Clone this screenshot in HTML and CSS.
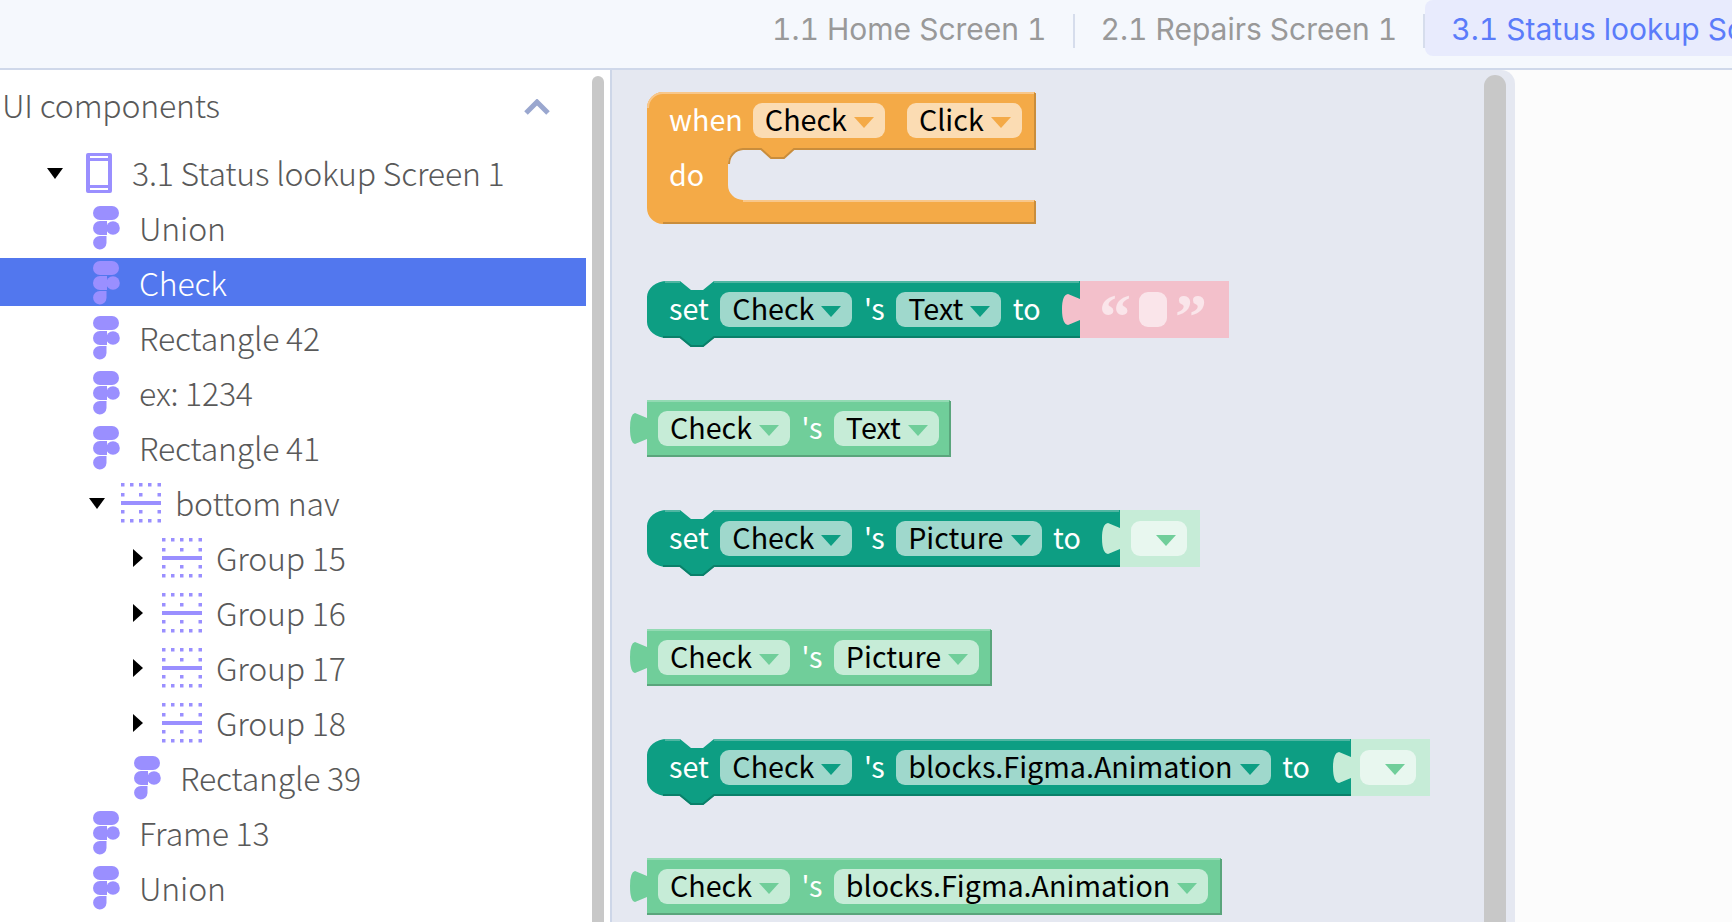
FILE: index.html
```html
<!DOCTYPE html>
<html lang="en">
    <head>
        <meta charset="UTF-8">
        <meta name="viewport" content="width=device-width, initial-scale=1.0">
        <title>Blocks editor</title>
        <link rel="stylesheet" href="styles.css">
    </head>
    <body>
        <svg class="icon-defs" width="0" height="0">
            <symbol id="icon-figma" viewBox="0 0 27 44">
                <rect x="0" y="0" width="26" height="14" rx="7"/>
                <path d="M7 15h7v14H7a7 7 0 0 1 0-14z"/>
                <circle cx="20" cy="22" r="6.8"/>
                <path d="M7 30h6.5v7a6.7 6.7 0 1 1-6.5-7z"/>
            </symbol>
            <symbol id="icon-phone" viewBox="0 0 26 40">
                <path fill-rule="evenodd" d="M2 0h22a2 2 0 0 1 2 2v36a2 2 0 0 1-2 2H2a2 2 0 0 1-2-2V2a2 2 0 0 1 2-2zM4 3v2h18V3zM4 8v24h18V8zM4 35v2h18v-2z"/>
            </symbol>
            <symbol id="icon-group" viewBox="0 0 40 40">
                <path d="M0 0h3.5v3.5H0zM9 0h3.5v3.5H9zM18 0h3.5v3.5h-3.5zM27 0h3.5v3.5h-3.5zM36.500 0h3.5v3.5h-3.5zM0 10h3.5v3.5H0zM18 10h3.5v3.5h-3.5zM36.500 10h3.5v3.500h-3.5zM0 18h40v4H0zM0 27h3.5v3.5H0zM18 27h3.5v3.5h-3.5zM36.500 27h3.5v3.5h-3.5zM0 36h3.5v3.5H0zM9 36h3.5v3.5H9zM18 36h3.5v3.5h-3.5zM27 36h3.5v3.5h-3.5zM36.500 36h3.5v3.5h-3.5z"/>
            </symbol>
        </svg>

        <header class="topbar">
            <nav class="tabs">
                <a class="tab">1.1 Home Screen 1</a>
                <span class="tab-sep"></span>
                <a class="tab">2.1 Repairs Screen 1</a>
                <span class="tab-sep"></span>
                <a class="tab tab-active">3.1 Status lookup Screen 1</a>
            </nav>
        </header>

        <main class="main">
            <aside class="sidebar">
                <div class="sidebar-inner">
                    <div class="sidebar-head">
                        <span>UI components</span>
                        <svg class="chevron" width="26" height="16" viewBox="0 0 26 16"><path d="M2 14 13 3l11 11"/></svg>
                    </div>
                    <ul class="tree">
                        <li class="row row-screen"><span class="caret caret-down"></span><svg class="icon icon-phone"><use href="#icon-phone"/></svg>3.1 Status lookup Screen 1</li>
                        <li class="row row-leaf"><svg class="icon icon-figma"><use href="#icon-figma"/></svg>Union</li>
                        <li class="row row-leaf row-selected"><svg class="icon icon-figma"><use href="#icon-figma"/></svg>Check</li>
                        <li class="row row-leaf"><svg class="icon icon-figma"><use href="#icon-figma"/></svg>Rectangle 42</li>
                        <li class="row row-leaf"><svg class="icon icon-figma"><use href="#icon-figma"/></svg>ex: 1234</li>
                        <li class="row row-leaf"><svg class="icon icon-figma"><use href="#icon-figma"/></svg>Rectangle 41</li>
                        <li class="row row-nav"><span class="caret caret-down"></span><svg class="icon icon-group"><use href="#icon-group"/></svg>bottom nav</li>
                        <li class="row row-group"><span class="caret caret-right"></span><svg class="icon icon-group"><use href="#icon-group"/></svg>Group 15</li>
                        <li class="row row-group"><span class="caret caret-right"></span><svg class="icon icon-group"><use href="#icon-group"/></svg>Group 16</li>
                        <li class="row row-group"><span class="caret caret-right"></span><svg class="icon icon-group"><use href="#icon-group"/></svg>Group 17</li>
                        <li class="row row-group"><span class="caret caret-right"></span><svg class="icon icon-group"><use href="#icon-group"/></svg>Group 18</li>
                        <li class="row row-leaf row-leaf-deep"><svg class="icon icon-figma"><use href="#icon-figma"/></svg>Rectangle 39</li>
                        <li class="row row-leaf"><svg class="icon icon-figma"><use href="#icon-figma"/></svg>Frame 13</li>
                        <li class="row row-leaf"><svg class="icon icon-figma"><use href="#icon-figma"/></svg>Union</li>
                    </ul>
                </div>
                <div class="scrollbar scrollbar-side"></div>
            </aside>

            <section class="workspace">
                <div class="canvas">

                    <!-- when Check.Click -->
                    <div class="block block-event">
                        <svg class="shape" width="389" height="133">
                            <path class="fill" d="M0 16A16 16 0 0 1 16 0H388V57H147L137 66H124L114 57H96A15 15 0 0 0 81 72V93A15 15 0 0 0 96 108H388V132H16A16 16 0 0 1 0 116Z"/>
                            <path class="light" d="M1 16A15 15 0 0 1 16 1H387M96 109H387"/>
                            <path class="dark" d="M388 1V57H147L137 66H124L114 57H96A15 15 0 0 0 82 72M388 109V131H16"/>
                        </svg>
                        <div class="line line-when">
                            <span>when</span>
                            <span class="field">Check<i class="arrow"></i></span>
                            <span class="field field-event">Click<i class="arrow"></i></span>
                        </div>
                        <div class="line line-do"><span>do</span></div>
                    </div>

                    <!-- set Check.Text -->
                    <div class="block block-set">
                        <svg class="shape" width="582" height="67">
                            <path class="fill" d="M0 16A20 16 0 0 1 20 0H33L44 9H56L67 0H433V57H67L56 66H44L33 57H20A20 16 0 0 1 0 41Z"/>
                            <path class="light" d="M18 1H33M67 1H432"/>
                            <path class="dark" d="M16 56H33L44 65H56L67 56H433"/>
                            <path class="value-pink" d="M433 0H582V57H433V39L421 44Q415 43 415 28Q415 14 421 13L433 18Z"/>
                        </svg>
                        <div class="line">
                            <span>set</span>
                            <span class="field">Check<i class="arrow"></i></span>
                            <span>'s</span>
                            <span class="field">Text<i class="arrow"></i></span>
                            <span>to</span>
                            <span class="string-slot">
                                <span class="quote">“</span>
                                <span class="field field-string"></span>
                                <span class="quote">”</span>
                            </span>
                        </div>
                    </div>

                    <!-- Check.Text getter -->
                    <div class="block block-get">
                        <svg class="shape" width="304" height="58">
                            <path class="fill" d="M0 0H303V57H0V39L-12 44Q-17 43-17 28Q-17 14-12 13L0 18Z"/>
                            <path class="light" d="M0 1H302"/>
                            <path class="dark" d="M303 1V56H0"/>
                        </svg>
                        <div class="line">
                            <span class="field">Check<i class="arrow"></i></span>
                            <span>'s</span>
                            <span class="field">Text<i class="arrow"></i></span>
                        </div>
                    </div>

                    <!-- set Check.Picture -->
                    <div class="block block-set">
                        <svg class="shape" width="553" height="67">
                            <path class="fill" d="M0 16A20 16 0 0 1 20 0H33L44 9H56L67 0H473V57H67L56 66H44L33 57H20A20 16 0 0 1 0 41Z"/>
                            <path class="light" d="M18 1H33M67 1H472"/>
                            <path class="dark" d="M16 56H33L44 65H56L67 56H473"/>
                            <path class="value-green" d="M473 0H553V57H473V39L461 44Q455 43 455 28Q455 14 461 13L473 18Z"/>
                        </svg>
                        <div class="line">
                            <span>set</span>
                            <span class="field">Check<i class="arrow"></i></span>
                            <span>'s</span>
                            <span class="field">Picture<i class="arrow"></i></span>
                            <span>to</span>
                            <span class="field field-empty"><i class="arrow"></i></span>
                        </div>
                    </div>

                    <!-- Check.Picture getter -->
                    <div class="block block-get">
                        <svg class="shape" width="345" height="58">
                            <path class="fill" d="M0 0H344V57H0V39L-12 44Q-17 43-17 28Q-17 14-12 13L0 18Z"/>
                            <path class="light" d="M0 1H343"/>
                            <path class="dark" d="M344 1V56H0"/>
                        </svg>
                        <div class="line">
                            <span class="field">Check<i class="arrow"></i></span>
                            <span>'s</span>
                            <span class="field">Picture<i class="arrow"></i></span>
                        </div>
                    </div>

                    <!-- set Check.blocks.Figma.Animation -->
                    <div class="block block-set">
                        <svg class="shape" width="783" height="67">
                            <path class="fill" d="M0 16A20 16 0 0 1 20 0H33L44 9H56L67 0H704V57H67L56 66H44L33 57H20A20 16 0 0 1 0 41Z"/>
                            <path class="light" d="M18 1H33M67 1H703"/>
                            <path class="dark" d="M16 56H33L44 65H56L67 56H704"/>
                            <path class="value-green" d="M704 0H783V57H704V39L692 44Q686 43 686 28Q686 14 692 13L704 18Z"/>
                        </svg>
                        <div class="line">
                            <span>set</span>
                            <span class="field">Check<i class="arrow"></i></span>
                            <span>'s</span>
                            <span class="field">blocks.Figma.Animation<i class="arrow"></i></span>
                            <span>to</span>
                            <span class="field field-empty"><i class="arrow"></i></span>
                        </div>
                    </div>

                    <!-- Check.blocks.Figma.Animation getter -->
                    <div class="block block-get">
                        <svg class="shape" width="575" height="58">
                            <path class="fill" d="M0 0H574V57H0V39L-12 44Q-17 43-17 28Q-17 14-12 13L0 18Z"/>
                            <path class="light" d="M0 1H573"/>
                            <path class="dark" d="M574 1V56H0"/>
                        </svg>
                        <div class="line">
                            <span class="field">Check<i class="arrow"></i></span>
                            <span>'s</span>
                            <span class="field">blocks.Figma.Animation<i class="arrow"></i></span>
                        </div>
                    </div>

                </div>
                <div class="scrollbar scrollbar-work"></div>
            </section>

            <div class="blank"></div>
        </main>
    </body>
</html>
```

FILE: styles.css
```css
*{
    box-sizing: border-box;
}
html, body{
    height: 100%;
}
body{
    margin: 0;
    display: flex;
    flex-direction: column;
    overflow: hidden;
    background-color: #fcfcfc;
    font-family: "Noto Sans CJK SC", "Noto Sans", sans-serif;
}
.icon-defs{
    position: absolute;
}

/* top bar */
.topbar{
    flex: none;
    height: 70px;
    background-color: #f5f8fd;
    border-bottom: 2px solid #cfd8ea;
    overflow: hidden;
}
.tabs{
    display: flex;
    align-items: flex-start;
    padding-left: 772px;
    font-family: Inter, sans-serif;
    font-size: 30px;
    font-variant-numeric: tabular-nums;
    color: #999999;
    white-space: nowrap;
}
.tab{
    display: block;
    line-height: 58px;
    height: 56px;
}
.tab-sep{
    flex: none;
    width: 2px;
    height: 34px;
    margin: 14px 26px 0 26px;
    background-color: #d6ddec;
}
.tab-active{
    margin-left: -26px;
    padding: 0 40px 0 26px;
    background-color: #e8ebfd;
    border-radius: 8px 0 0 8px;
    color: #5b7cfa;
}

/* layout */
.main{
    flex: 1;
    display: flex;
    min-height: 0;
}
.sidebar{
    flex: none;
    width: 612px;
    display: flex;
    background-color: #ffffff;
    border-right: 2px solid #cdd6e8;
    overflow: hidden;
}
.sidebar-inner{
    flex: none;
    width: 586px;
}
.scrollbar{
    flex: none;
    background-color: #c8c8c8;
}
.scrollbar-side{
    width: 12px;
    margin: 6px 0 0 6px;
    border-radius: 6px 6px 0 0;
}
.workspace{
    flex: none;
    width: 903px;
    display: flex;
    justify-content: space-between;
    background-color: #e5e8f1;
    border-top-right-radius: 14px;
    overflow: hidden;
}
.scrollbar-work{
    width: 22px;
    margin: 5px 9px 0 0;
    border-radius: 11px 11px 0 0;
}
.blank{
    flex: 1;
}

/* tree */
.sidebar-head{
    display: flex;
    justify-content: space-between;
    align-items: center;
    height: 78px;
    padding: 0 36px 10px 2px;
    font-size: 32px;
    font-weight: 300;
    letter-spacing: -0.2px;
    color: #595959;
}
.chevron{
    margin-top: 6px;
    fill: none;
    stroke: #9aa7cf;
    stroke-width: 5;
}
.tree{
    list-style: none;
    margin: 0;
    padding: 0;
}
.row{
    display: flex;
    align-items: center;
    height: 48px;
    margin-bottom: 7px;
    padding-bottom: 1px;
    font-size: 32px;
    font-weight: 300;
    letter-spacing: -0.2px;
    line-height: 1;
    color: #595959;
    white-space: nowrap;
}
.row-selected{
    background-color: #5277ee;
    color: #ffffff;
}
.icon{
    flex: none;
    margin-top: 3px;
    fill: #9a8fff;
}
.icon-figma{
    width: 27px;
    height: 44px;
    margin-right: 19px;
}
.icon-phone{
    width: 26px;
    height: 40px;
    margin-right: 20px;
}
.icon-group{
    width: 40px;
    height: 40px;
    margin-right: 14px;
}
.row-screen{
    padding-left: 47px;
}
.row-leaf{
    padding-left: 93px;
}
.row-leaf-deep{
    padding-left: 134px;
}
.row-nav{
    padding-left: 89px;
}
.row-group{
    padding-left: 133px;
}
.caret{
    flex: none;
    width: 0;
    height: 0;
    margin-top: 3px;
    border-style: solid;
    border-color: transparent;
}
.caret-down{
    border-width: 11px 8.5px 0;
    border-top-color: #000000;
}
.row-screen .caret{
    margin-right: 23px;
}
.row-nav .caret{
    margin-right: 16px;
}
.caret-right{
    border-width: 9px 0 9px 10px;
    border-left-color: #000000;
    margin-right: 19px;
}

/* blocks */
.canvas{
    display: flex;
    flex-direction: column;
    align-items: flex-start;
    padding: 22px 0 0 35px;
    font-size: 28.7px;
    line-height: 1;
    color: #ffffff;
}
.block{
    position: relative;
    flex: none;
}
.shape{
    position: absolute;
    left: 0;
    top: 0;
    overflow: visible;
}
.shape path{
    stroke-width: 2;
}
.light, .dark{
    fill: none;
}
.line{
    position: relative;
    display: flex;
    align-items: center;
    height: 57px;
    gap: 11.5px;
    white-space: nowrap;
}
.line > span{
    padding-bottom: 3px;
}
.field{
    display: inline-flex;
    align-items: center;
    gap: 7px;
    height: 35px;
    padding: 0 11px 3px 12px;
    border-radius: 9px;
    color: #000000;
}
.arrow{
    flex: none;
    width: 0;
    height: 0;
    margin-top: 6px;
    border-style: solid;
    border-color: transparent;
    border-width: 11px 10px 0;
}

.block-event{
    height: 132px;
    padding-left: 22px;
}
.block-event .fill{
    fill: #f4aa47;
}
.block-event .light{
    stroke: #f8c78a;
}
.block-event .dark{
    stroke: #c98d3c;
}
.block-event .field{
    background-color: #fbdcb3;
}
.block-event .arrow{
    border-top-color: #f4aa47;
}
.line-when{
    gap: 10px;
}
.line .field-event{
    margin-left: 12px;
}
.line-do{
    height: 51px;
    padding-top: 2px;
}

.block-set{
    height: 57px;
    margin-top: 53px;
    padding-left: 22px;
}
.block-event + .block-set{
    margin-top: 57px;
}
.block-set .fill{
    fill: #0d9e83;
}
.block-set .light{
    stroke: #4fb6a2;
}
.block-set .dark{
    stroke: #0a806a;
}
.block-set .field{
    background-color: #9fd8cc;
}
.block-set .arrow{
    border-top-color: #0d9e83;
}
.value-pink{
    fill: #f3c0cb;
}
.value-green{
    fill: #c6ecd7;
}
.block-set .field-empty{
    justify-content: flex-end;
    width: 56px;
    margin-left: 39px;
    padding-right: 11px;
    background-color: #e8f7ef;
}
.block-set .field-empty .arrow{
    border-top-color: #70ce9a;
}
.string-slot{
    display: flex;
    align-items: center;
    gap: 8px;
    margin-left: 47px;
}
.line > .string-slot{
    padding-bottom: 0;
}
.quote{
    height: 35px;
    font-family: "Liberation Serif", serif;
    font-size: 64px;
    font-weight: bold;
    line-height: 50px;
    color: #fae5ea;
}
.block-set .field-string{
    width: 28px;
    padding: 0;
    background-color: #fae5ea;
}

.block-get{
    height: 57px;
    margin-top: 62px;
    padding-left: 11px;
}
.block-get .fill{
    fill: #70ce9a;
}
.block-get .light{
    stroke: #93dab3;
}
.block-get .dark{
    stroke: #5aa57c;
}
.block-get .field{
    background-color: #c6ecd7;
}
.block-get .arrow{
    border-top-color: #70ce9a;
}
```
